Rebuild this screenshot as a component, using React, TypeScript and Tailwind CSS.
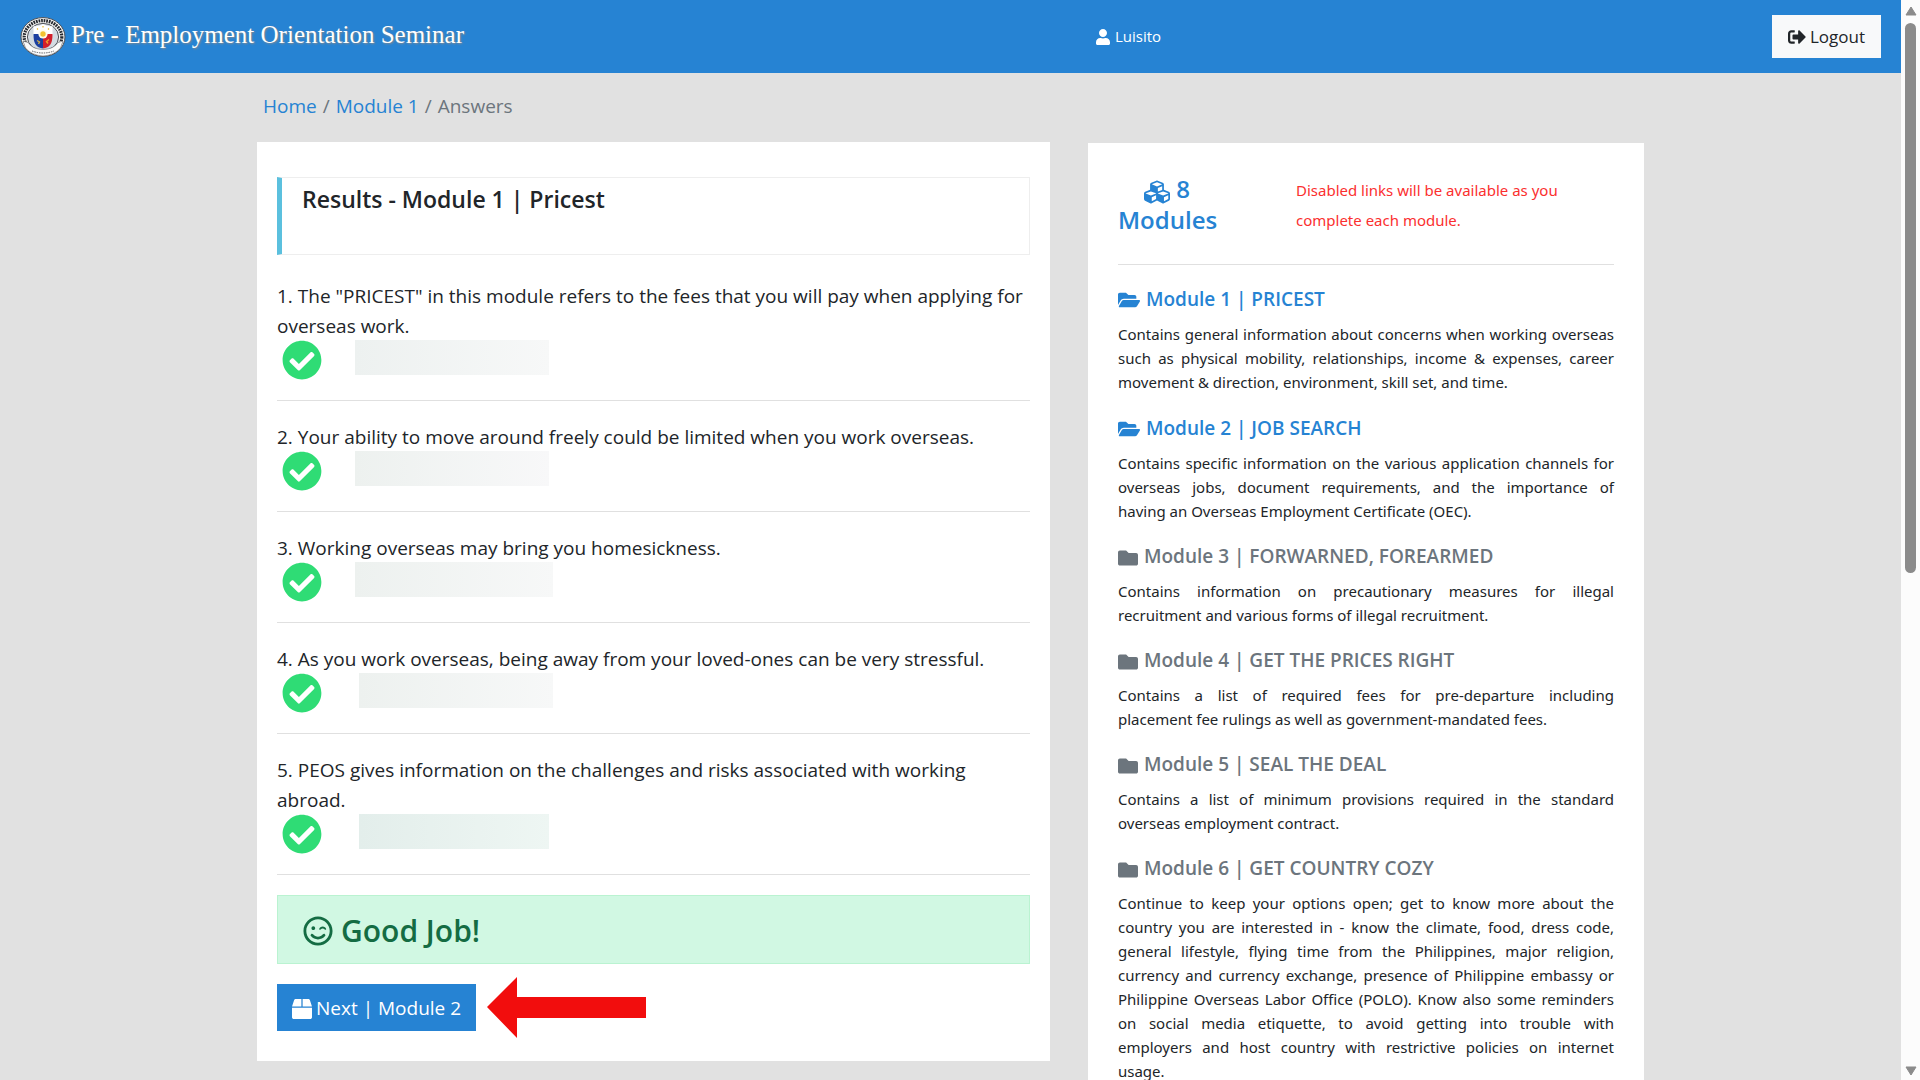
import React from "react";
import {
  FaBox,
  FaCheckCircle,
  FaCubes,
  FaFolder,
  FaFolderOpen,
  FaRegSmileWink,
  FaSignOutAlt,
  FaUser,
} from "react-icons/fa";

interface Question {
  text: string;
  // size and shade of the hidden answer
  answer: string;
}

interface Module {
  title: string;
  description: string;
  open?: boolean;
}

const questions: Question[] = [
  {
    text: '1. The "PRICEST" in this module refers to the fees that you will pay when applying for overseas work.',
    answer: "ml-[33px] w-[194px] from-[#edf1f0] to-[#f7f8f8]",
  },
  {
    text: "2. Your ability to move around freely could be limited when you work overseas.",
    answer: "ml-[33px] w-[194px] from-[#edf1ef] to-[#f8f8f9]",
  },
  {
    text: "3. Working overseas may bring you homesickness.",
    answer: "ml-[33px] w-[198px] from-[#edf1ef] to-[#f7f8f8]",
  },
  {
    text: "4. As you work overseas, being away from your loved-ones can be very stressful.",
    answer: "ml-[37px] w-[194px] from-[#edf1ef] to-[#f7f8f8]",
  },
  {
    text: "5. PEOS gives information on the challenges and risks associated with working abroad.",
    answer: "ml-[37px] w-[190px] from-[#e3eeeb] to-[#eef6f3]",
  },
];

// \u00a0 keeps word pairs together when the justified lines wrap
const modules: Module[] = [
  {
    title: "Module 1 | PRICEST",
    description:
      "Contains general information about concerns when working overseas such as physical mobility, relationships, income & expenses, career movement & direction, environment, skill set, and time.",
    open: true,
  },
  {
    title: "Module 2 | JOB SEARCH",
    description:
      "Contains specific information on the various application channels for overseas jobs, document requirements, and the importance of having\u00a0an Overseas Employment Certificate (OEC).",
    open: true,
  },
  {
    title: "Module 3 | FORWARNED, FOREARMED",
    description:
      "Contains information on precautionary measures for illegal recruitment and various forms of illegal recruitment.",
  },
  {
    title: "Module 4 | GET THE PRICES RIGHT",
    description:
      "Contains a list of required fees for pre-departure including placement\u00a0fee rulings as well as government-mandated fees.",
  },
  {
    title: "Module 5 | SEAL THE DEAL",
    description:
      "Contains a list of minimum provisions required in the standard overseas employment contract.",
  },
  {
    title: "Module 6 | GET COUNTRY COZY",
    description:
      "Continue to keep your options open; get to know more about the country you are interested in - know the climate, food, dress code, general lifestyle, flying time from the Philippines, major religion, currency and currency exchange, presence of Philippine embassy or Philippine Overseas Labor Office (POLO). Know also some reminders on social media etiquette, to avoid getting into trouble with employers\u00a0and host country with restrictive policies on internet usage.\u00a0\u00a0",
  },
];

const Seal = () => (
  <svg viewBox="0 0 46 40" className="w-[46px] h-10 shrink-0" aria-hidden="true">
    <ellipse cx="23" cy="20" rx="22" ry="19.4" fill="#f4f4f2" stroke="#4c4f55" strokeWidth="1" />
    <ellipse cx="23" cy="20" rx="18.8" ry="16.4" fill="none" stroke="#25282e" strokeWidth="3.2" strokeDasharray="1.7 0.9" />
    <ellipse cx="23" cy="20" rx="15.6" ry="13.6" fill="#d3dbe2" stroke="#3f4248" strokeWidth="0.9" />
    {/* Ribbon */}
    <path d="M3 24 L8 25.5 Q12 32 23 32.5 Q34 32 38 25.5 L43 24 L40.5 31 Q34 38.5 23 39 Q12 38.5 5.5 31 Z" fill="#fafafa" stroke="#6a6d72" strokeWidth="0.6" />
    <path d="M12 34 Q23 38 34 34" fill="none" stroke="#55585e" strokeWidth="1" strokeDasharray="1.4 1" />
    {/* Shield */}
    <path d="M13.5 9 Q18 10 23 7 Q28 10 32.5 9 V18 H13.5 Z" fill="#fff" />
    <path d="M13.5 17 H23 V31.5 C16.5 30 13.5 28 13.5 17 Z" fill="#1b3fa0" />
    <path d="M32.5 17 H23 V31.5 C29.5 30 32.5 28 32.5 17 Z" fill="#d2202c" />
    <circle cx="23" cy="17" r="4.6" fill="#fffbe8" />
    <circle cx="23" cy="17" r="2.7" fill="#f2c230" />
    <path d="M17 11.5 l1 1 M29 11.5 l-1 1 M23 9 v1.5" stroke="#e5b72c" strokeWidth="1.2" />
    <path d="M17 23.5 l2.5 1.5 l-1 2" stroke="#c8a94a" strokeWidth="1.4" fill="none" />
    <path d="M29 22.5 l-2.5 2 l1.5 2" stroke="#f0a02c" strokeWidth="1.4" fill="none" />
  </svg>
);

const Navbar = () => (
  <nav className="flex items-center h-[73px] bg-[#2683d3] text-white">
    {/* Brand */}
    <div className="flex flex-1 items-center gap-[5px] pl-5">
      <Seal />
      <span className="pb-1 font-['Liberation_Serif',serif] text-[25px] leading-8 [text-shadow:1px_1px_2px_#8a8a8a] whitespace-nowrap">
        Pre - Employment Orientation Seminar
      </span>
    </div>

    {/* User and logout */}
    <div className="flex w-[806px] items-center justify-between pr-5">
      <span className="flex items-center gap-1 text-[15px]">
        <FaUser className="w-4 h-4" />
        Luisito
      </span>
      <button
        type="button"
        className="flex items-center gap-1 h-[43px] px-4 bg-[#f8f9fa] text-[#212529] text-[17px]"
      >
        <FaSignOutAlt className="w-[18px] h-[18px]" />
        Logout
      </button>
    </div>
  </nav>
);

const Breadcrumb = () => (
  <ol className="flex gap-1.5 px-1.5 pt-[18px] pb-[21px] text-[19px] leading-[30px] text-[#6c757d]">
    <li>
      <a href="#home" className="text-[#2683d3]">
        Home
      </a>
    </li>
    <li>/</li>
    <li>
      <a href="#module-1" className="text-[#2683d3]">
        Module 1
      </a>
    </li>
    <li>/</li>
    <li>Answers</li>
  </ol>
);

const QuestionItem = ({ question }: { question: Question }) => (
  <li className="mb-[21px] last:mb-5 pb-5 border-b border-[#e0e0e0] text-[19px] leading-[30px]">
    {question.text}
    <div className="flex h-10 -mt-px pl-[5px]">
      <FaCheckCircle className="w-10 h-10 text-[#2fdc75]" />
      <div className={`h-[35px] bg-linear-to-r ${question.answer}`} />
    </div>
  </li>
);

const Results = () => (
  <section className="bg-white px-5 pt-[35px] pb-[30px]">
    <div className="h-[78px] mb-[26px] pl-5 pt-[5px] border border-l-5 border-[#eeeeee] border-l-[#5bc0de]">
      <h1 className="text-[23px] leading-8 font-semibold">Results - Module 1 | Pricest</h1>
    </div>

    <ol>
      {questions.map((question) => (
        <QuestionItem key={question.text} question={question} />
      ))}
    </ol>

    <div className="flex items-center gap-2 h-[69px] mb-5 px-[25px] pt-0.5 bg-[#d1f8e3] border border-[#baf3d1] text-[#146c43]">
      <FaRegSmileWink className="w-[30px] h-[30px]" />
      <h2 className="text-[30px] font-semibold">Good Job!</h2>
    </div>

    <div className="flex items-center gap-[11px] h-[47px]">
      <button
        type="button"
        className="flex items-center gap-1 h-[47px] px-[15px] pt-0.5 bg-[#2683d3] text-white text-[19px]"
      >
        <FaBox className="w-5 h-5" />
        Next | Module 2
      </button>
      <svg viewBox="0 0 159 61" className="w-[159px] h-[61px]" aria-hidden="true">
        <path d="M0 30 L30 0 V20 H159 V41 H30 V61 Z" fill="#f20d0d" />
      </svg>
    </div>
  </section>
);

const ModuleItem = ({ module }: { module: Module }) => (
  <li className="mb-[21px]">
    <h3
      className={`flex items-center gap-1.5 mb-[11px] text-[19px] leading-6 font-semibold ${
        module.open ? "text-[#2683d3]" : "text-[#6c757d]"
      }`}
    >
      {module.open ? (
        <FaFolderOpen className="w-[22px] h-[22px] mt-[3px]" />
      ) : (
        <FaFolder className="w-5 h-5 mt-[3px]" />
      )}
      {module.open ? <a href="#module">{module.title}</a> : module.title}
    </h3>
    <p className="font-['Noto_Sans',sans-serif] text-[15px] leading-6 text-justify">
      {module.description}
    </p>
  </li>
);

const Sidebar = () => (
  <aside className="bg-white mt-px px-[30px] pt-[31px]">
    <div className="flex gap-20 pb-[29px] mb-[21px] border-b border-[#e0e0e0]">
      <h2 className="w-[98px] text-center text-[24px] leading-[30px] font-semibold text-[#2683d3]">
        <FaCubes className="inline w-[26px] h-[26px]" /> 8 Modules
      </h2>
      <p className="flex-1 pt-px font-['Noto_Sans',sans-serif] text-[15px] leading-[30px] text-[#fb2f2f]">
        Disabled links will be available as you complete each module.
      </p>
    </div>

    <ul>
      {modules.map((module) => (
        <ModuleItem key={module.title} module={module} />
      ))}
    </ul>
  </aside>
);

const ScrollTrack = () => (
  <div className="flex flex-col items-center w-[19px] h-screen shrink-0 pt-1.5 pb-1 bg-[#fcfcfc]">
    <svg viewBox="0 0 12 10" className="w-3 h-2.5" aria-hidden="true">
      <path d="M6 1 L11 9 H1 Z" fill="#8b8b8b" stroke="#8b8b8b" strokeLinejoin="round" />
    </svg>
    <div className="w-[11px] h-[550px] mt-[7px] mb-auto rounded-full bg-[#8b8b8b]" />
    <svg viewBox="0 0 12 10" className="w-3 h-2.5" aria-hidden="true">
      <path d="M6 9 L1 1 H11 Z" fill="#8b8b8b" stroke="#8b8b8b" strokeLinejoin="round" />
    </svg>
  </div>
);

const App = () => {
  return (
    <div className="flex h-screen overflow-hidden bg-[#e1e1e1] font-['Open_Sans',sans-serif] text-[#212529]">
      <div className="flex-1 min-w-0">
        <Navbar />
        <main className="max-w-[1387px] mx-auto">
          <Breadcrumb />
          <div className="grid grid-cols-[793fr_556fr] items-start gap-[38px]">
            <Results />
            <Sidebar />
          </div>
        </main>
      </div>
      <ScrollTrack />
    </div>
  );
};

export default App;
